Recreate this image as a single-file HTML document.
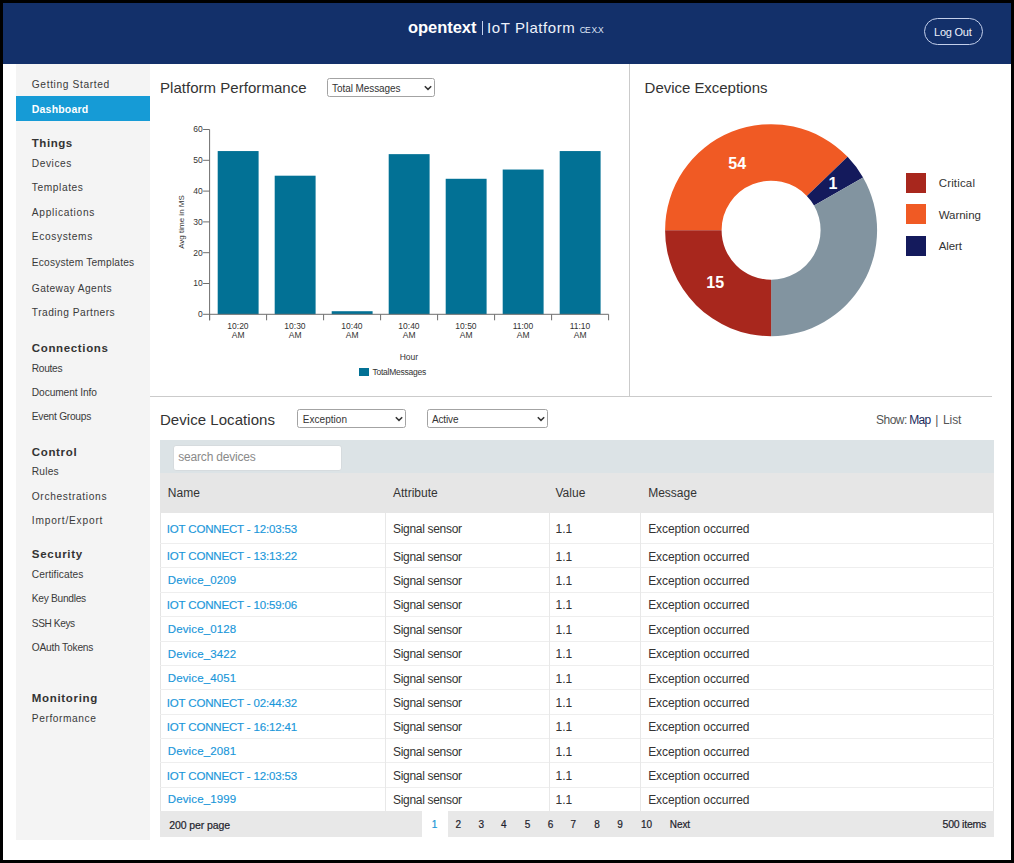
<!DOCTYPE html>
<html><head><meta charset="utf-8"><style>
html,body{margin:0;padding:0;background:#000;width:1014px;height:863px;overflow:hidden}
body{position:relative;font-family:"Liberation Sans",sans-serif}
.t{position:absolute;white-space:nowrap;font-family:"Liberation Sans",sans-serif}
</style></head><body>
<div style="position:absolute;left:3.00px;top:3.00px;width:1008.00px;height:857.00px;background:#fff"></div>
<div style="position:absolute;left:3.00px;top:3.00px;width:1008.00px;height:61.00px;background:#13306a"></div>
<div class="t" style="left:408.10px;top:19.23px;font-size:16.5px;line-height:16.5px;color:#fff;font-weight:bold;letter-spacing:-0.066px;">opentext</div>
<div style="position:absolute;left:481.60px;top:21.40px;width:1.20px;height:13.30px;background:#c5d2ee"></div>
<div class="t" style="left:487.00px;top:19.90px;font-size:15px;line-height:15px;color:#eef2fb;letter-spacing:0.583px;">IoT Platform</div>
<div class="t" style="left:579.70px;top:25.80px;font-size:8.5px;line-height:8.5px;color:#dfe6f5;letter-spacing:-0.760px;">CE X.X</div>
<div style="position:absolute;left:924px;top:18px;width:57px;height:25px;border:1px solid #c3cfea;border-radius:14px"></div>
<div class="t" style="left:934.00px;top:27.19px;font-size:11px;line-height:11px;color:#eef2fb;letter-spacing:-0.231px;">Log Out</div>
<div style="position:absolute;left:16.00px;top:64.00px;width:134.00px;height:776.00px;background:#f4f4f4"></div>
<div style="position:absolute;left:16.00px;top:96.20px;width:134.00px;height:24.60px;background:#169bd6"></div>
<div class="t" style="left:31.80px;top:80.27px;font-size:10.2px;line-height:10.2px;color:#3a3a3a;letter-spacing:0.639px;">Getting Started</div>
<div class="t" style="left:31.80px;top:104.11px;font-size:10.5px;line-height:10.5px;color:#fff;font-weight:bold;letter-spacing:0.196px;">Dashboard</div>
<div class="t" style="left:31.80px;top:137.97px;font-size:11.5px;line-height:11.5px;color:#333;font-weight:bold;letter-spacing:0.541px;">Things</div>
<div class="t" style="left:31.80px;top:158.77px;font-size:10.2px;line-height:10.2px;color:#3a3a3a;letter-spacing:0.560px;">Devices</div>
<div class="t" style="left:31.80px;top:183.47px;font-size:10.2px;line-height:10.2px;color:#3a3a3a;letter-spacing:0.583px;">Templates</div>
<div class="t" style="left:31.80px;top:207.67px;font-size:10.2px;line-height:10.2px;color:#3a3a3a;letter-spacing:0.697px;">Applications</div>
<div class="t" style="left:31.80px;top:231.87px;font-size:10.2px;line-height:10.2px;color:#3a3a3a;letter-spacing:0.620px;">Ecosystems</div>
<div class="t" style="left:31.80px;top:258.07px;font-size:10.2px;line-height:10.2px;color:#3a3a3a;letter-spacing:0.195px;">Ecosystem Templates</div>
<div class="t" style="left:31.80px;top:284.27px;font-size:10.2px;line-height:10.2px;color:#3a3a3a;letter-spacing:0.434px;">Gateway Agents</div>
<div class="t" style="left:31.80px;top:308.47px;font-size:10.2px;line-height:10.2px;color:#3a3a3a;letter-spacing:0.493px;">Trading Partners</div>
<div class="t" style="left:31.80px;top:342.97px;font-size:11.5px;line-height:11.5px;color:#333;font-weight:bold;letter-spacing:0.646px;">Connections</div>
<div class="t" style="left:31.80px;top:363.77px;font-size:10.2px;line-height:10.2px;color:#3a3a3a;letter-spacing:-0.317px;">Routes</div>
<div class="t" style="left:31.80px;top:387.67px;font-size:10.2px;line-height:10.2px;color:#3a3a3a;letter-spacing:-0.091px;">Document Info</div>
<div class="t" style="left:31.80px;top:412.17px;font-size:10.2px;line-height:10.2px;color:#3a3a3a;letter-spacing:-0.254px;">Event Groups</div>
<div class="t" style="left:31.80px;top:446.97px;font-size:11.5px;line-height:11.5px;color:#333;font-weight:bold;letter-spacing:0.653px;">Control</div>
<div class="t" style="left:31.80px;top:467.37px;font-size:10.2px;line-height:10.2px;color:#3a3a3a;letter-spacing:0.212px;">Rules</div>
<div class="t" style="left:31.80px;top:491.57px;font-size:10.2px;line-height:10.2px;color:#3a3a3a;letter-spacing:0.650px;">Orchestrations</div>
<div class="t" style="left:31.80px;top:515.77px;font-size:10.2px;line-height:10.2px;color:#3a3a3a;letter-spacing:0.790px;">Import/Export</div>
<div class="t" style="left:31.80px;top:549.47px;font-size:11.5px;line-height:11.5px;color:#333;font-weight:bold;letter-spacing:0.716px;">Security</div>
<div class="t" style="left:31.80px;top:570.27px;font-size:10.2px;line-height:10.2px;color:#3a3a3a;letter-spacing:0.058px;">Certificates</div>
<div class="t" style="left:31.80px;top:594.47px;font-size:10.2px;line-height:10.2px;color:#3a3a3a;letter-spacing:-0.281px;">Key Bundles</div>
<div class="t" style="left:31.80px;top:619.01px;font-size:10.15px;line-height:10.15px;color:#3a3a3a;letter-spacing:-0.400px;">SSH Keys</div>
<div class="t" style="left:31.80px;top:643.37px;font-size:10.2px;line-height:10.2px;color:#3a3a3a;letter-spacing:-0.200px;">OAuth Tokens</div>
<div class="t" style="left:31.80px;top:693.47px;font-size:11.5px;line-height:11.5px;color:#333;font-weight:bold;letter-spacing:0.681px;">Monitoring</div>
<div class="t" style="left:31.80px;top:713.77px;font-size:10.2px;line-height:10.2px;color:#3a3a3a;letter-spacing:0.585px;">Performance</div>
<div style="position:absolute;left:628.50px;top:64.00px;width:1.00px;height:332.50px;background:#cbcbcb"></div>
<div style="position:absolute;left:150.00px;top:395.50px;width:842.00px;height:1.00px;background:#cbcbcb"></div>
<div class="t" style="left:160.00px;top:79.80px;font-size:15px;line-height:15px;color:#333;letter-spacing:0.035px;">Platform Performance</div>
<div style="position:absolute;left:326.6px;top:77.7px;width:106.30px;height:17.00px;border:1px solid #a3a3a3;border-radius:2.5px;background:#fff"></div>
<svg style="position:absolute;left:423.70px;top:84.60px" width="8" height="6" viewBox="0 0 8 6"><path d="M0.8 1.2 L4 4.4 L7.2 1.2" fill="none" stroke="#333" stroke-width="1.5"/></svg>
<div class="t" style="left:332.00px;top:83.73px;font-size:10px;line-height:10px;color:#333;letter-spacing:-0.068px;">Total Messages</div>
<svg style="position:absolute;left:0;top:0" width="1014" height="863" viewBox="0 0 1014 863"><rect x="217.70" y="151.06" width="40.9" height="163.24" fill="#027195"/><rect x="274.70" y="175.70" width="40.9" height="138.60" fill="#027195"/><rect x="331.70" y="311.22" width="40.9" height="3.08" fill="#027195"/><rect x="388.70" y="154.14" width="40.9" height="160.16" fill="#027195"/><rect x="445.70" y="178.78" width="40.9" height="135.52" fill="#027195"/><rect x="502.70" y="169.54" width="40.9" height="144.76" fill="#027195"/><rect x="559.70" y="151.06" width="40.9" height="163.24" fill="#027195"/><path d="M209.6 129.50 V320.3" stroke="#6e6e6e" stroke-width="1" fill="none"/><path d="M209.6 314.3 H608.6" stroke="#6e6e6e" stroke-width="1" fill="none"/><path d="M209.60 314.3 V320.3" stroke="#6e6e6e" stroke-width="1" fill="none"/><path d="M266.60 314.3 V320.3" stroke="#6e6e6e" stroke-width="1" fill="none"/><path d="M323.60 314.3 V320.3" stroke="#6e6e6e" stroke-width="1" fill="none"/><path d="M380.60 314.3 V320.3" stroke="#6e6e6e" stroke-width="1" fill="none"/><path d="M437.60 314.3 V320.3" stroke="#6e6e6e" stroke-width="1" fill="none"/><path d="M494.60 314.3 V320.3" stroke="#6e6e6e" stroke-width="1" fill="none"/><path d="M551.60 314.3 V320.3" stroke="#6e6e6e" stroke-width="1" fill="none"/><path d="M608.60 314.3 V320.3" stroke="#6e6e6e" stroke-width="1" fill="none"/><path d="M203.1 314.30 H209.6" stroke="#6e6e6e" stroke-width="1" fill="none"/><path d="M203.1 283.50 H209.6" stroke="#6e6e6e" stroke-width="1" fill="none"/><path d="M203.1 252.70 H209.6" stroke="#6e6e6e" stroke-width="1" fill="none"/><path d="M203.1 221.90 H209.6" stroke="#6e6e6e" stroke-width="1" fill="none"/><path d="M203.1 191.10 H209.6" stroke="#6e6e6e" stroke-width="1" fill="none"/><path d="M203.1 160.30 H209.6" stroke="#6e6e6e" stroke-width="1" fill="none"/><path d="M203.1 129.50 H209.6" stroke="#6e6e6e" stroke-width="1" fill="none"/></svg>
<div class="t" style="left:198.00px;top:310.10px;font-size:8.5px;line-height:8.5px;color:#333;">0</div>
<div class="t" style="left:193.27px;top:279.30px;font-size:8.5px;line-height:8.5px;color:#333;">10</div>
<div class="t" style="left:193.27px;top:248.50px;font-size:8.5px;line-height:8.5px;color:#333;">20</div>
<div class="t" style="left:193.27px;top:217.70px;font-size:8.5px;line-height:8.5px;color:#333;">30</div>
<div class="t" style="left:193.27px;top:186.90px;font-size:8.5px;line-height:8.5px;color:#333;">40</div>
<div class="t" style="left:193.27px;top:156.10px;font-size:8.5px;line-height:8.5px;color:#333;">50</div>
<div class="t" style="left:193.27px;top:125.30px;font-size:8.5px;line-height:8.5px;color:#333;">60</div>
<div class="t" style="left:227.33px;top:321.80px;font-size:8.5px;line-height:8.5px;color:#333;">10:20</div>
<div class="t" style="left:231.77px;top:330.50px;font-size:8.5px;line-height:8.5px;color:#333;">AM</div>
<div class="t" style="left:284.33px;top:321.80px;font-size:8.5px;line-height:8.5px;color:#333;">10:30</div>
<div class="t" style="left:288.77px;top:330.50px;font-size:8.5px;line-height:8.5px;color:#333;">AM</div>
<div class="t" style="left:341.33px;top:321.80px;font-size:8.5px;line-height:8.5px;color:#333;">10:40</div>
<div class="t" style="left:345.77px;top:330.50px;font-size:8.5px;line-height:8.5px;color:#333;">AM</div>
<div class="t" style="left:398.33px;top:321.80px;font-size:8.5px;line-height:8.5px;color:#333;">10:40</div>
<div class="t" style="left:402.77px;top:330.50px;font-size:8.5px;line-height:8.5px;color:#333;">AM</div>
<div class="t" style="left:455.33px;top:321.80px;font-size:8.5px;line-height:8.5px;color:#333;">10:50</div>
<div class="t" style="left:459.77px;top:330.50px;font-size:8.5px;line-height:8.5px;color:#333;">AM</div>
<div class="t" style="left:512.64px;top:321.80px;font-size:8.5px;line-height:8.5px;color:#333;">11:00</div>
<div class="t" style="left:516.77px;top:330.50px;font-size:8.5px;line-height:8.5px;color:#333;">AM</div>
<div class="t" style="left:569.64px;top:321.80px;font-size:8.5px;line-height:8.5px;color:#333;">11:10</div>
<div class="t" style="left:573.77px;top:330.50px;font-size:8.5px;line-height:8.5px;color:#333;">AM</div>
<div style="position:absolute;left:182px;top:222px;width:0;height:0"><div style="position:absolute;left:0;top:0;transform:translate(-50%,-50%) rotate(-90deg);font-family:'Liberation Sans';font-size:8px;color:#333;white-space:nowrap;line-height:8px">Avg time in MS</div></div>
<div class="t" style="left:399.70px;top:352.80px;font-size:8.5px;line-height:8.5px;color:#333;">Hour</div>
<div style="position:absolute;left:358.50px;top:367.90px;width:10.70px;height:8.10px;background:#027195"></div>
<div class="t" style="left:372.50px;top:368.30px;font-size:8.5px;line-height:8.5px;color:#333;letter-spacing:-0.245px;">TotalMessages</div>
<div class="t" style="left:644.60px;top:79.60px;font-size:15px;line-height:15px;color:#333;letter-spacing:-0.031px;">Device Exceptions</div>
<svg style="position:absolute;left:0;top:0" width="1014" height="863" viewBox="0 0 1014 863"><path d="M665.10 230.20 A106 106 0 0 1 847.61 156.83 L806.83 195.94 A49.5 49.5 0 0 0 721.60 230.20 Z" fill="#f05a24"/><path d="M847.61 156.83 A106 106 0 0 1 863.08 177.52 L814.05 205.60 A49.5 49.5 0 0 0 806.83 195.94 Z" fill="#141a5c"/><path d="M863.08 177.52 A106 106 0 0 1 771.10 336.20 L771.10 279.70 A49.5 49.5 0 0 0 814.05 205.60 Z" fill="#8294a0"/><path d="M771.10 336.20 A106 106 0 0 1 665.10 230.20 L721.60 230.20 A49.5 49.5 0 0 0 771.10 279.70 Z" fill="#a8271d"/></svg>
<div class="t" style="left:728.35px;top:156.46px;font-size:16px;line-height:16px;color:#fff;font-weight:bold;">54</div>
<div class="t" style="left:828.60px;top:175.86px;font-size:16px;line-height:16px;color:#fff;font-weight:bold;">1</div>
<div class="t" style="left:706.25px;top:275.06px;font-size:16px;line-height:16px;color:#fff;font-weight:bold;">15</div>
<div style="position:absolute;left:906.00px;top:172.90px;width:20.30px;height:19.90px;background:#a8271d"></div>
<div class="t" style="left:938.70px;top:177.97px;font-size:11.5px;line-height:11.5px;color:#333;letter-spacing:0.159px;">Critical</div>
<div style="position:absolute;left:906.00px;top:204.45px;width:20.30px;height:19.90px;background:#f05a24"></div>
<div class="t" style="left:938.70px;top:209.52px;font-size:11.5px;line-height:11.5px;color:#333;letter-spacing:-0.033px;">Warning</div>
<div style="position:absolute;left:906.00px;top:236.00px;width:20.30px;height:19.90px;background:#141a5c"></div>
<div class="t" style="left:938.70px;top:241.07px;font-size:11.5px;line-height:11.5px;color:#333;letter-spacing:-0.088px;">Alert</div>
<div class="t" style="left:159.90px;top:411.70px;font-size:15px;line-height:15px;color:#333;letter-spacing:0.058px;">Device Locations</div>
<div style="position:absolute;left:297.2px;top:409.1px;width:106.60px;height:16.70px;border:1px solid #a3a3a3;border-radius:2.5px;background:#fff"></div>
<svg style="position:absolute;left:394.60px;top:415.85px" width="8" height="6" viewBox="0 0 8 6"><path d="M0.8 1.2 L4 4.4 L7.2 1.2" fill="none" stroke="#333" stroke-width="1.5"/></svg>
<div class="t" style="left:302.80px;top:414.99px;font-size:10px;line-height:10px;color:#333;letter-spacing:0.031px;">Exception</div>
<div style="position:absolute;left:426.6px;top:409.1px;width:119.70px;height:16.70px;border:1px solid #a3a3a3;border-radius:2.5px;background:#fff"></div>
<svg style="position:absolute;left:537.10px;top:415.85px" width="8" height="6" viewBox="0 0 8 6"><path d="M0.8 1.2 L4 4.4 L7.2 1.2" fill="none" stroke="#333" stroke-width="1.5"/></svg>
<div class="t" style="left:431.90px;top:414.99px;font-size:10px;line-height:10px;color:#333;letter-spacing:-0.114px;">Active</div>
<div class="t" style="left:876.00px;top:414.44px;font-size:12px;line-height:12px;color:#555;letter-spacing:-0.504px;">Show:</div>
<div class="t" style="left:909.30px;top:414.44px;font-size:12px;line-height:12px;color:#1b2a5a;letter-spacing:-0.785px;">Map</div>
<div class="t" style="left:935.20px;top:414.44px;font-size:12px;line-height:12px;color:#555;">|</div>
<div class="t" style="left:943.10px;top:414.44px;font-size:12px;line-height:12px;color:#555;letter-spacing:-0.147px;">List</div>
<div style="position:absolute;left:160.30px;top:440.30px;width:834.20px;height:32.70px;background:#dce3e6"></div>
<div style="position:absolute;left:172.5px;top:444.8px;width:167px;height:23.8px;background:#fff;border:1px solid #d6dbde;border-radius:3px"></div>
<div class="t" style="left:178.30px;top:450.54px;font-size:12px;line-height:12px;color:#8a8a8a;letter-spacing:-0.203px;">search devices</div>
<div style="position:absolute;left:160.30px;top:473.00px;width:834.20px;height:39.80px;background:#e6e6e6"></div>
<div class="t" style="left:167.80px;top:487.14px;font-size:12px;line-height:12px;color:#333;">Name</div>
<div class="t" style="left:393.00px;top:487.14px;font-size:12px;line-height:12px;color:#333;">Attribute</div>
<div class="t" style="left:555.50px;top:487.14px;font-size:12px;line-height:12px;color:#333;">Value</div>
<div class="t" style="left:648.20px;top:487.14px;font-size:12px;line-height:12px;color:#333;">Message</div>
<div style="position:absolute;left:160.30px;top:512.80px;width:834.20px;height:298.20px;background:#fff;border-left:1px solid #e4e4e4;border-right:1px solid #e4e4e4;box-sizing:border-box"></div>
<div style="position:absolute;left:160.30px;top:542.50px;width:834.20px;height:1.00px;background:#eeeeee"></div>
<div class="t" style="left:166.80px;top:523.57px;font-size:11.5px;line-height:11.5px;color:#1a97da;letter-spacing:-0.167px;-webkit-text-stroke:0.15px #1a97da;">IOT CONNECT - 12:03:53</div>
<div class="t" style="left:393.00px;top:523.14px;font-size:12px;line-height:12px;color:#333;letter-spacing:-0.309px;">Signal sensor</div>
<div class="t" style="left:555.60px;top:523.14px;font-size:12px;line-height:12px;color:#333;">1.1</div>
<div class="t" style="left:648.20px;top:523.14px;font-size:12px;line-height:12px;color:#333;letter-spacing:-0.085px;">Exception occurred</div>
<div style="position:absolute;left:160.30px;top:567.30px;width:834.20px;height:1.00px;background:#eeeeee"></div>
<div class="t" style="left:166.80px;top:551.07px;font-size:11.5px;line-height:11.5px;color:#1a97da;letter-spacing:-0.167px;-webkit-text-stroke:0.15px #1a97da;">IOT CONNECT - 13:13:22</div>
<div class="t" style="left:393.00px;top:550.64px;font-size:12px;line-height:12px;color:#333;letter-spacing:-0.309px;">Signal sensor</div>
<div class="t" style="left:555.60px;top:550.64px;font-size:12px;line-height:12px;color:#333;">1.1</div>
<div class="t" style="left:648.20px;top:550.64px;font-size:12px;line-height:12px;color:#333;letter-spacing:-0.085px;">Exception occurred</div>
<div style="position:absolute;left:160.30px;top:591.60px;width:834.20px;height:1.00px;background:#eeeeee"></div>
<div class="t" style="left:167.80px;top:575.37px;font-size:11.5px;line-height:11.5px;color:#1a97da;letter-spacing:0.117px;-webkit-text-stroke:0.15px #1a97da;">Device_0209</div>
<div class="t" style="left:393.00px;top:574.94px;font-size:12px;line-height:12px;color:#333;letter-spacing:-0.309px;">Signal sensor</div>
<div class="t" style="left:555.60px;top:574.94px;font-size:12px;line-height:12px;color:#333;">1.1</div>
<div class="t" style="left:648.20px;top:574.94px;font-size:12px;line-height:12px;color:#333;letter-spacing:-0.085px;">Exception occurred</div>
<div style="position:absolute;left:160.30px;top:616.10px;width:834.20px;height:1.00px;background:#eeeeee"></div>
<div class="t" style="left:166.80px;top:599.87px;font-size:11.5px;line-height:11.5px;color:#1a97da;letter-spacing:-0.167px;-webkit-text-stroke:0.15px #1a97da;">IOT CONNECT - 10:59:06</div>
<div class="t" style="left:393.00px;top:599.44px;font-size:12px;line-height:12px;color:#333;letter-spacing:-0.309px;">Signal sensor</div>
<div class="t" style="left:555.60px;top:599.44px;font-size:12px;line-height:12px;color:#333;">1.1</div>
<div class="t" style="left:648.20px;top:599.44px;font-size:12px;line-height:12px;color:#333;letter-spacing:-0.085px;">Exception occurred</div>
<div style="position:absolute;left:160.30px;top:640.60px;width:834.20px;height:1.00px;background:#eeeeee"></div>
<div class="t" style="left:167.80px;top:624.37px;font-size:11.5px;line-height:11.5px;color:#1a97da;letter-spacing:0.117px;-webkit-text-stroke:0.15px #1a97da;">Device_0128</div>
<div class="t" style="left:393.00px;top:623.94px;font-size:12px;line-height:12px;color:#333;letter-spacing:-0.309px;">Signal sensor</div>
<div class="t" style="left:555.60px;top:623.94px;font-size:12px;line-height:12px;color:#333;">1.1</div>
<div class="t" style="left:648.20px;top:623.94px;font-size:12px;line-height:12px;color:#333;letter-spacing:-0.085px;">Exception occurred</div>
<div style="position:absolute;left:160.30px;top:665.00px;width:834.20px;height:1.00px;background:#eeeeee"></div>
<div class="t" style="left:167.80px;top:648.77px;font-size:11.5px;line-height:11.5px;color:#1a97da;letter-spacing:0.117px;-webkit-text-stroke:0.15px #1a97da;">Device_3422</div>
<div class="t" style="left:393.00px;top:648.34px;font-size:12px;line-height:12px;color:#333;letter-spacing:-0.309px;">Signal sensor</div>
<div class="t" style="left:555.60px;top:648.34px;font-size:12px;line-height:12px;color:#333;">1.1</div>
<div class="t" style="left:648.20px;top:648.34px;font-size:12px;line-height:12px;color:#333;letter-spacing:-0.085px;">Exception occurred</div>
<div style="position:absolute;left:160.30px;top:689.40px;width:834.20px;height:1.00px;background:#eeeeee"></div>
<div class="t" style="left:167.80px;top:673.17px;font-size:11.5px;line-height:11.5px;color:#1a97da;letter-spacing:0.117px;-webkit-text-stroke:0.15px #1a97da;">Device_4051</div>
<div class="t" style="left:393.00px;top:672.74px;font-size:12px;line-height:12px;color:#333;letter-spacing:-0.309px;">Signal sensor</div>
<div class="t" style="left:555.60px;top:672.74px;font-size:12px;line-height:12px;color:#333;">1.1</div>
<div class="t" style="left:648.20px;top:672.74px;font-size:12px;line-height:12px;color:#333;letter-spacing:-0.085px;">Exception occurred</div>
<div style="position:absolute;left:160.30px;top:713.80px;width:834.20px;height:1.00px;background:#eeeeee"></div>
<div class="t" style="left:166.80px;top:697.57px;font-size:11.5px;line-height:11.5px;color:#1a97da;letter-spacing:-0.167px;-webkit-text-stroke:0.15px #1a97da;">IOT CONNECT - 02:44:32</div>
<div class="t" style="left:393.00px;top:697.14px;font-size:12px;line-height:12px;color:#333;letter-spacing:-0.309px;">Signal sensor</div>
<div class="t" style="left:555.60px;top:697.14px;font-size:12px;line-height:12px;color:#333;">1.1</div>
<div class="t" style="left:648.20px;top:697.14px;font-size:12px;line-height:12px;color:#333;letter-spacing:-0.085px;">Exception occurred</div>
<div style="position:absolute;left:160.30px;top:738.10px;width:834.20px;height:1.00px;background:#eeeeee"></div>
<div class="t" style="left:166.80px;top:721.87px;font-size:11.5px;line-height:11.5px;color:#1a97da;letter-spacing:-0.167px;-webkit-text-stroke:0.15px #1a97da;">IOT CONNECT - 16:12:41</div>
<div class="t" style="left:393.00px;top:721.44px;font-size:12px;line-height:12px;color:#333;letter-spacing:-0.309px;">Signal sensor</div>
<div class="t" style="left:555.60px;top:721.44px;font-size:12px;line-height:12px;color:#333;">1.1</div>
<div class="t" style="left:648.20px;top:721.44px;font-size:12px;line-height:12px;color:#333;letter-spacing:-0.085px;">Exception occurred</div>
<div style="position:absolute;left:160.30px;top:762.40px;width:834.20px;height:1.00px;background:#eeeeee"></div>
<div class="t" style="left:167.80px;top:746.17px;font-size:11.5px;line-height:11.5px;color:#1a97da;letter-spacing:0.117px;-webkit-text-stroke:0.15px #1a97da;">Device_2081</div>
<div class="t" style="left:393.00px;top:745.74px;font-size:12px;line-height:12px;color:#333;letter-spacing:-0.309px;">Signal sensor</div>
<div class="t" style="left:555.60px;top:745.74px;font-size:12px;line-height:12px;color:#333;">1.1</div>
<div class="t" style="left:648.20px;top:745.74px;font-size:12px;line-height:12px;color:#333;letter-spacing:-0.085px;">Exception occurred</div>
<div style="position:absolute;left:160.30px;top:786.80px;width:834.20px;height:1.00px;background:#eeeeee"></div>
<div class="t" style="left:166.80px;top:770.57px;font-size:11.5px;line-height:11.5px;color:#1a97da;letter-spacing:-0.167px;-webkit-text-stroke:0.15px #1a97da;">IOT CONNECT - 12:03:53</div>
<div class="t" style="left:393.00px;top:770.14px;font-size:12px;line-height:12px;color:#333;letter-spacing:-0.309px;">Signal sensor</div>
<div class="t" style="left:555.60px;top:770.14px;font-size:12px;line-height:12px;color:#333;">1.1</div>
<div class="t" style="left:648.20px;top:770.14px;font-size:12px;line-height:12px;color:#333;letter-spacing:-0.085px;">Exception occurred</div>
<div class="t" style="left:167.80px;top:794.27px;font-size:11.5px;line-height:11.5px;color:#1a97da;letter-spacing:0.117px;-webkit-text-stroke:0.15px #1a97da;">Device_1999</div>
<div class="t" style="left:393.00px;top:793.84px;font-size:12px;line-height:12px;color:#333;letter-spacing:-0.309px;">Signal sensor</div>
<div class="t" style="left:555.60px;top:793.84px;font-size:12px;line-height:12px;color:#333;">1.1</div>
<div class="t" style="left:648.20px;top:793.84px;font-size:12px;line-height:12px;color:#333;letter-spacing:-0.085px;">Exception occurred</div>
<div style="position:absolute;left:385.30px;top:512.80px;width:1.00px;height:298.20px;background:#e8e8e8"></div>
<div style="position:absolute;left:549.10px;top:512.80px;width:1.00px;height:298.20px;background:#e8e8e8"></div>
<div style="position:absolute;left:639.90px;top:512.80px;width:1.00px;height:298.20px;background:#e8e8e8"></div>
<div style="position:absolute;left:160.30px;top:811.00px;width:834.20px;height:25.80px;background:#e8e8e8"></div>
<div style="position:absolute;left:422.00px;top:811.00px;width:26.00px;height:25.80px;background:#fff"></div>
<div class="t" style="left:169.20px;top:819.71px;font-size:10.5px;line-height:10.5px;color:#1e1e2c;letter-spacing:-0.095px;-webkit-text-stroke:0.2px #1e1e2c;">200 per page</div>
<div class="t" style="left:431.70px;top:819.74px;font-size:10px;line-height:10px;color:#1a96d6;-webkit-text-stroke:0.2px #1a96d6;">1</div>
<div class="t" style="left:455.40px;top:819.74px;font-size:10px;line-height:10px;color:#1e1e2c;-webkit-text-stroke:0.2px #1e1e2c;">2</div>
<div class="t" style="left:478.40px;top:819.74px;font-size:10px;line-height:10px;color:#1e1e2c;-webkit-text-stroke:0.2px #1e1e2c;">3</div>
<div class="t" style="left:501.10px;top:819.74px;font-size:10px;line-height:10px;color:#1e1e2c;-webkit-text-stroke:0.2px #1e1e2c;">4</div>
<div class="t" style="left:524.80px;top:819.74px;font-size:10px;line-height:10px;color:#1e1e2c;-webkit-text-stroke:0.2px #1e1e2c;">5</div>
<div class="t" style="left:547.80px;top:819.74px;font-size:10px;line-height:10px;color:#1e1e2c;-webkit-text-stroke:0.2px #1e1e2c;">6</div>
<div class="t" style="left:570.60px;top:819.74px;font-size:10px;line-height:10px;color:#1e1e2c;-webkit-text-stroke:0.2px #1e1e2c;">7</div>
<div class="t" style="left:594.20px;top:819.74px;font-size:10px;line-height:10px;color:#1e1e2c;-webkit-text-stroke:0.2px #1e1e2c;">8</div>
<div class="t" style="left:617.30px;top:819.74px;font-size:10px;line-height:10px;color:#1e1e2c;-webkit-text-stroke:0.2px #1e1e2c;">9</div>
<div class="t" style="left:641.02px;top:819.74px;font-size:10px;line-height:10px;color:#1e1e2c;-webkit-text-stroke:0.2px #1e1e2c;">10</div>
<div class="t" style="left:669.80px;top:819.74px;font-size:10px;line-height:10px;color:#1e1e2c;letter-spacing:-0.094px;-webkit-text-stroke:0.2px #1e1e2c;">Next</div>
<div class="t" style="left:942.50px;top:819.41px;font-size:10.5px;line-height:10.5px;color:#1e1e2c;letter-spacing:-0.209px;-webkit-text-stroke:0.2px #1e1e2c;">500 items</div>
</body></html>
